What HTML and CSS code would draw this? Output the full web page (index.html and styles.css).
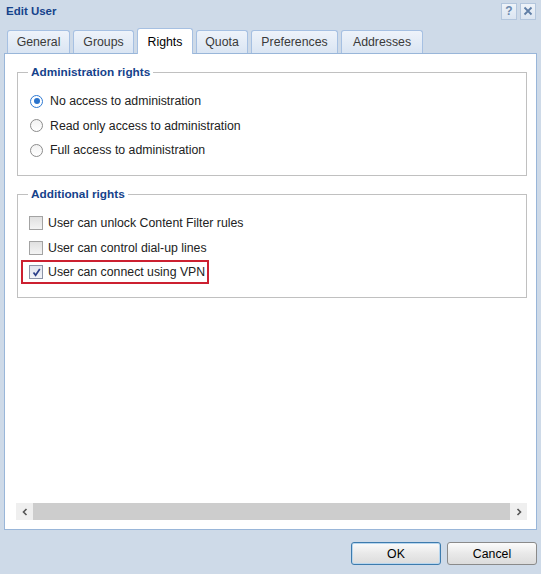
FILE: index.html
```html
<!DOCTYPE html>
<html>
<head>
<meta charset="utf-8">
<link rel="stylesheet" href="styles.css">
</head>
<body>
<div class="window">
  <div class="titlebar">
    <span class="title">Edit User</span>
    <div class="tools">
      <span class="tool">?</span>
      <span class="tool"><svg width="10" height="10" viewBox="0 0 10 10"><path d="M1.5 1.5 L8.5 8.5 M8.5 1.5 L1.5 8.5" stroke="#5f7ea6" stroke-width="1.8" fill="none"/></svg></span>
    </div>
  </div>
  <div class="tabs">
    <div class="tab">General</div>
    <div class="tab">Groups</div>
    <div class="tab active">Rights</div>
    <div class="tab">Quota</div>
    <div class="tab">Preferences</div>
    <div class="tab">Addresses</div>
  </div>
  <div class="panel">
    <div class="content">
      <fieldset class="group">
        <legend>Administration rights</legend>
        <div class="row radio-row"><span class="radio checked"></span>No access to administration</div>
        <div class="row radio-row"><span class="radio"></span>Read only access to administration</div>
        <div class="row radio-row"><span class="radio"></span>Full access to administration</div>
      </fieldset>
      <fieldset class="group group2">
        <legend>Additional rights</legend>
        <div class="row check-row"><span class="check"></span>User can unlock Content Filter rules</div>
        <div class="row check-row"><span class="check"></span>User can control dial-up lines</div>
        <div class="row check-row highlight"><span class="check checked"><svg width="11" height="11" viewBox="0 0 11 11"><path d="M2.5 5.5 L4.6 8.3 L8.8 2" stroke="#2b3f8a" stroke-width="1.7" fill="none"/></svg></span>User can connect using VPN</div>
      </fieldset>
    </div>
    <div class="scrollbar">
      <span class="sbtn"><svg width="8" height="8" viewBox="0 0 8 8"><path d="M5.5 1 L2.5 4 L5.5 7" stroke="#555" stroke-width="1.6" fill="none"/></svg></span>
      <span class="track"></span>
      <span class="sbtn"><svg width="8" height="8" viewBox="0 0 8 8"><path d="M2.5 1 L5.5 4 L2.5 7" stroke="#555" stroke-width="1.6" fill="none"/></svg></span>
    </div>
  </div>
  <div class="footer">
    <button class="btn default">OK</button>
    <button class="btn">Cancel</button>
  </div>
</div>
</body>
</html>
```
FILE: styles.css
```css
html, body {
  margin: 0;
  padding: 0;
  background: #cedae8;
}
body {
  font-family: "Liberation Sans", Arial, sans-serif;
  font-size: 12px;
  color: #222;
}
.window {
  width: 541px;
  height: 574px;
  display: flex;
  flex-direction: column;
  background: #cedae8;
}
.titlebar {
  height: 24px;
  display: flex;
  align-items: center;
  justify-content: space-between;
  padding: 0 6px 0 6px;
}
.title {
  font-weight: bold;
  color: #15428b;
  font-size: 11.5px;
  margin-top: -2px;
}
.tools {
  display: flex;
  gap: 3px;
  margin-top: -2px;
  margin-right: -1px;
}
.tool {
  width: 14px;
  height: 15px;
  border: 1px solid #b3c6dd;
  background: linear-gradient(#eef3f9, #dbe5f1);
  color: #6b88ad;
  font-weight: bold;
  font-size: 12px;
  display: flex;
  align-items: center;
  justify-content: center;
}
.tabs {
  height: 29px;
  display: flex;
  align-items: flex-end;
  gap: 3px;
  padding-left: 7px;
}
.tab {
  height: 23px;
  box-sizing: border-box;
  border: 1px solid #a6c0e2;
  border-bottom: none;
  border-radius: 3px 3px 0 0;
  background: linear-gradient(#eef3fa, #dae5f3);
  color: #3a3a3a;
  font-size: 12.3px;
  padding: 4px 0 0 0;
  text-align: center;
}
.tab:nth-child(1) { width: 63px; }
.tab:nth-child(2) { width: 61px; }
.tab:nth-child(3) { width: 56px; }
.tab:nth-child(4) { width: 52px; }
.tab:nth-child(5) { width: 87px; }
.tab:nth-child(6) { width: 82px; }
.tab.active {
  height: 26px;
  background: #fff;
  color: #000;
  padding-top: 6px;
  margin-bottom: -1px;
  position: relative;
}
.panel {
  margin: 0 4px 0 4px;
  height: 477px;
  box-sizing: border-box;
  background: #fff;
  border: 1px solid #99b6d9;
  display: flex;
  flex-direction: column;
}
.content {
  flex: 1;
  padding: 11px 9px 0 12px;
}
.group {
  margin: 0;
  border: 1px solid #c0c0c0;
  padding: 4px 0 6px 10px;
  height: 111px;
  box-sizing: border-box;
}
.group2 {
  margin-top: 11px;
}
legend {
  color: #15428b;
  font-weight: bold;
  font-size: 11.8px;
  padding: 0 3px;
}
.row {
  display: flex;
  align-items: center;
  font-size: 12.3px;
  color: #222;
}
.radio-row {
  height: 24.5px;
  padding-left: 2px;
}
.radio-row:first-of-type {
  margin-top: 6px;
}
.radio {
  width: 11px;
  height: 11px;
  border-radius: 50%;
  border: 1px solid #8c8c8c;
  background: linear-gradient(#f2f2f2, #fff);
  margin-right: 7px;
  position: relative;
  flex: none;
}
.radio.checked {
  border-color: #2f7ad3;
  background: #fff;
}
.radio.checked::after {
  content: "";
  position: absolute;
  left: 2.5px;
  top: 2.5px;
  width: 6px;
  height: 6px;
  border-radius: 50%;
  background: #2a73cc;
}
.check-row {
  height: 24.5px;
  padding-left: 1px;
}
.check-row:first-of-type {
  margin-top: 6px;
}
.check {
  width: 12px;
  height: 12px;
  border: 1px solid #a3a3a3;
  background: linear-gradient(#e0e0e0, #f4f4f4);
  margin-right: 5px;
  flex: none;
  display: flex;
  align-items: center;
  justify-content: center;
}
.check.checked {
  background: linear-gradient(#dfe3ee, #f3f4f8);
  border-color: #8c94a8;
}
.highlight {
  margin-left: -7px;
  padding-left: 6px;
  width: 178px;
  height: 20px;
  border: 2px solid #cc2030;
}
.scrollbar {
  height: 17px;
  margin: 0 9px 9px 11px;
  display: flex;
  background: #cdcdcd;
}
.sbtn {
  width: 17px;
  height: 17px;
  background: #efefef;
  display: flex;
  align-items: center;
  justify-content: center;
}
.track {
  flex: 1;
}
.footer {
  flex: 1;
  display: flex;
  justify-content: flex-end;
  align-items: flex-start;
  gap: 6px;
  padding: 12px 4px 0 0;
}
.btn {
  width: 90px;
  height: 23px;
  border: 1px solid #8a8a8a;
  border-radius: 3px;
  background: linear-gradient(#fbfbfb, #e9e9e9 50%, #dcdcdc);
  font-family: "Liberation Sans", Arial, sans-serif;
  font-size: 12.3px;
  color: #000;
  padding: 0;
}
.btn.default {
  border-color: #3d7bad;
  box-shadow: inset 0 0 0 1px #b8d6ee;
}
```
